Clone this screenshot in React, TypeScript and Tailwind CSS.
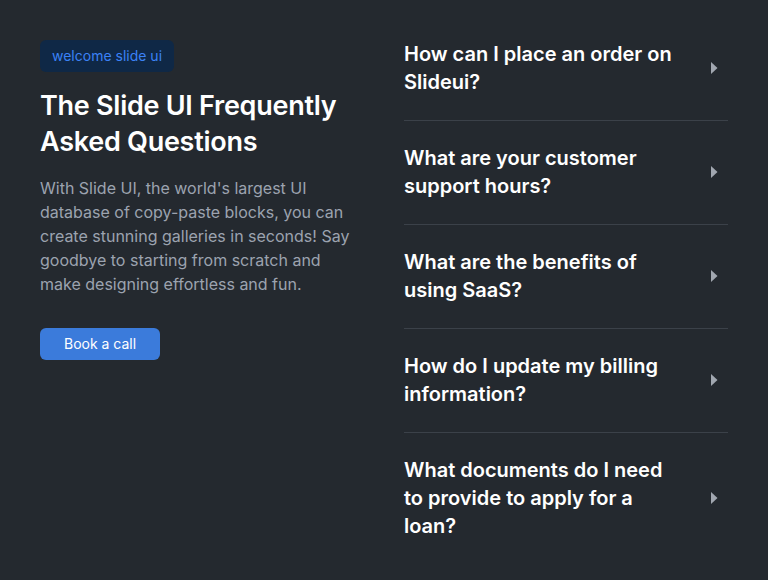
import React from "react";

const faqs = [
  "How can I place an order on Slideui?",
  "What are your customer support hours?",
  "What are the benefits of using SaaS?",
  "How do I update my billing information?",
  "What documents do I need to provide to apply for a loan?",
];

function Caret() {
  return (
    <svg width="8" height="14" viewBox="0 0 8 14" className="shrink-0">
      <path d="M1 1 L7.5 7 L1 13 Z" fill="#a1a7b0" />
    </svg>
  );
}

export default function App() {
  return (
    <div
      className="w-[768px] h-[580px] bg-[#24292f] p-10 grid grid-cols-2 gap-10 overflow-hidden"
      style={{ fontFamily: "Inter, 'Noto Sans', sans-serif" }}
    >
      <div className="flex flex-col items-start">
        <span className="h-8 px-3 flex items-center rounded-md bg-[#0f2846] text-[#3b82f6] text-sm">
          welcome slide ui
        </span>
        <h1 className="mt-4 text-[27px] leading-[36px] font-semibold tracking-[-0.01em] text-white">
          The Slide UI Frequently Asked Questions
        </h1>
        <p className="mt-4 text-base leading-6 text-[#9ca3af]">
          With Slide UI, the world's largest UI database of copy-paste blocks, you can create
          stunning galleries in seconds! Say goodbye to starting from scratch and make designing
          effortless and fun.
        </p>
        <button className="mt-8 h-8 px-6 rounded-md bg-[#3b7bdb] text-white text-sm">
          Book a call
        </button>
      </div>
      <div className="flex flex-col">
        {faqs.map((q, i) => (
          <div
            key={i}
            className={`flex items-center justify-between pb-6 ${
              i > 0 ? "pt-[23px] border-t border-[#3b4149]" : ""
            }`}
          >
            <span className="w-[276px] text-xl leading-7 font-semibold text-white">{q}</span>
            <div className="pr-2.5">
              <Caret />
            </div>
          </div>
        ))}
      </div>
    </div>
  );
}
